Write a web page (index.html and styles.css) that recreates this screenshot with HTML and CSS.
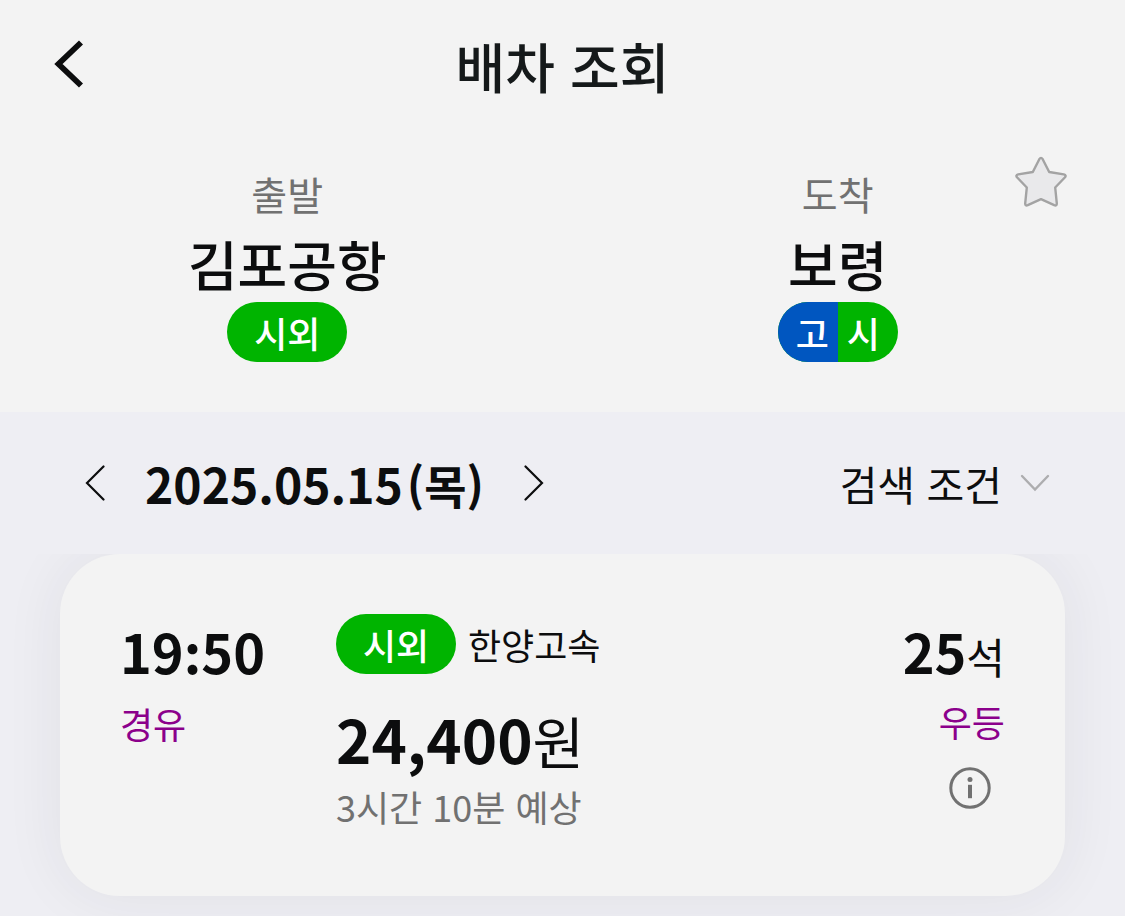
FILE: index.html
```html
<!doctype html>
<html lang="ko">
  <head>
    <meta charset="utf-8">
    <meta name="viewport" content="width=device-width, initial-scale=1">
    <title>배차 조회</title>
    <link rel="stylesheet" href="styles.css">
  </head>

  <body>
    <header class="topbar">
      <button class="icon-btn" type="button" aria-label="뒤로">
        <svg width="30" height="48" viewBox="0 0 30 48" fill="none" stroke="#0c0d0e" stroke-width="5.800">
          <path d="M28 2.500 L5.500 24 L28 45.500"/>
        </svg>
      </button>
      <h1>배차 조회</h1>
    </header>

    <section class="route">
      <div class="stop from">
        <span class="stop-label">출발</span>
        <strong class="stop-name">김포공항</strong>
        <span class="badge">시외</span>
      </div>
      <div class="stop to">
        <span class="stop-label">도착</span>
        <strong class="stop-name">보령</strong>
        <span class="badge split"><span class="express">고</span><span class="intercity">시</span></span>
      </div>
      <button class="icon-btn favorite" type="button" aria-label="즐겨찾기">
        <svg width="54" height="52" viewBox="0 0 54 52" fill="#e9e9eb" stroke="#a3a3a3" stroke-width="2.400" stroke-linejoin="round">
          <path d="M25.300 3.200 Q27 0.500 28.700 3.200 L35.200 16 L49.800 18.400 Q52.800 19.200 50.800 21.500 L41.200 31.500 L42.800 47.400 Q42.800 50.200 40.200 49.200 L27 43.200 L13.800 49.200 Q11.200 50.200 11.200 47.400 L12.800 31.500 L3.200 21.500 Q1.200 19.200 4.200 18.400 L18.800 16 Z"/>
        </svg>
      </button>
    </section>

    <nav class="datebar">
      <div class="date">
        <button class="icon-btn" type="button" aria-label="이전 날짜">
          <svg width="20" height="36" viewBox="0 0 20 36" fill="none" stroke="#0c0d0e" stroke-width="2.200" stroke-linecap="round">
            <path d="M18.500 1.500 L2 18 L18.500 34.500"/>
          </svg>
        </button>
        <time datetime="2025-05-15">2025.05.15<span class="weekday">(목)</span></time>
        <button class="icon-btn" type="button" aria-label="다음 날짜">
          <svg width="20" height="36" viewBox="0 0 20 36" fill="none" stroke="#0c0d0e" stroke-width="2.200" stroke-linecap="round">
            <path d="M1.500 1.500 L18 18 L1.500 34.500"/>
          </svg>
        </button>
      </div>
      <button class="filter" type="button">
        검색 조건
        <svg width="30" height="18" viewBox="0 0 30 18" fill="none" stroke="#adadaf" stroke-width="2.400" stroke-linecap="round">
          <path d="M2 2 L15 15.500 L28 2"/>
        </svg>
      </button>
    </nav>

    <main class="list">
      <article class="card">
        <div class="depart">
          <time class="big">19:50</time>
          <span class="note">경유</span>
        </div>
        <div class="fare">
          <div class="company"><span class="badge">시외</span> 한양고속</div>
          <div class="price"><strong>24,400</strong>원</div>
          <div class="duration">3시간 10분 예상</div>
        </div>
        <div class="seats">
          <div class="count"><strong class="big">25</strong>석</div>
          <span class="note">우등</span>
          <button class="icon-btn info" type="button" aria-label="상세 정보">
            <svg width="42" height="42" viewBox="0 0 42 42">
              <circle cx="21" cy="21" r="19.200" fill="none" stroke="#717171" stroke-width="3"/>
              <circle cx="21" cy="12.600" r="2.500" fill="#717171"/>
              <rect x="19" y="17.800" width="4" height="13.400" fill="#717171"/>
            </svg>
          </button>
        </div>
      </article>
    </main>
  </body>
</html>
```

FILE: styles.css
```css
* {
  box-sizing:border-box;
}

body {
  margin:0;
  min-height:100vh;
  background-color:#eeeef3;
  color:#0c0d0e;
  font-family:"Noto Sans CJK KR", sans-serif;
  font-size:36px;
}

button {
  border:0;
  padding:0;
  background:none;
  color:inherit;
  font:inherit;
  cursor:pointer;
}

svg {
  display:block;
}

.icon-btn {
  display:flex;
  align-items:center;
  justify-content:center;
}

.topbar {
  display:grid;
  grid-template-columns:80px 1fr 80px;
  align-items:center;
  height:128px;
  padding:0 28px;
  background-color:#f3f3f3;
}

.topbar h1 {
  margin:0;
  padding-top:2px;
  color:#15191a;
  font-size:54px;
  font-weight:500;
  text-align:center;
}

.route {
  display:grid;
  grid-template-columns:1fr 1fr;
  padding:36px 12px 50px;
  background-color:#f3f3f3;
}

.stop {
  display:flex;
  flex-direction:column;
  align-items:center;
  grid-row:1;
}

.from {
  grid-column:1;
}

.to,
.favorite {
  grid-column:2;
}

.favorite {
  grid-row:1;
  justify-self:end;
  align-self:start;
  width:60px;
  height:36px;
  margin-right:42px;
}

.stop-label {
  color:#717171;
  font-size:39px;
  line-height:58px;
}

.stop-name {
  margin-top:4px;
  font-size:54px;
  font-weight:500;
  line-height:76px;
}

.badge {
  display:flex;
  align-items:center;
  justify-content:center;
  width:120px;
  height:60px;
  border-radius:30px;
  overflow:hidden;
  background-color:#00b400;
  color:#fff;
  font-weight:500;
  line-height:58px;
}

.split span {
  flex:1;
  line-height:60px;
}

.express {
  padding-right:9px;
  background-color:#0056c0;
  text-align:right;
}

.intercity {
  padding-left:9px;
}

.datebar {
  position:relative;
  z-index:1;
  display:flex;
  align-items:center;
  justify-content:space-between;
  height:142px;
  padding:0 75px;
  background-color:#eeeef3;
}

.date {
  display:flex;
  align-items:center;
  gap:30px;
  font-size:48px;
  font-weight:700;
}

.date .icon-btn {
  width:40px;
  height:60px;
}

.weekday {
  margin-left:4px;
  font-size:46px;
}

.filter {
  display:flex;
  align-items:center;
  gap:18px;
  font-size:41px;
}

.list {
  padding:0 60px 20px;
}

.card {
  display:grid;
  grid-template-columns:216px 1fr auto;
  padding:60px 60px 64px;
  border-radius:60px;
  background-color:#f3f3f3;
  box-shadow:0 0 60px rgba(40, 40, 50, 0.07);
}

/* the Korean form of the colon sits too high between digits */
.big {
  font-family:"Noto Sans CJK JP", sans-serif;
  font-feature-settings:"locl" 0;
  font-size:54px;
  font-weight:700;
  line-height:74px;
}

.depart,
.seats {
  display:flex;
  flex-direction:column;
}

.depart {
  gap:12px;
}

.seats {
  align-items:flex-end;
}

.count {
  font-size:42px;
  line-height:84px;
}

.count .big,
.price strong {
  line-height:1;
}

.note {
  color:#8b008b;
  line-height:46px;
}

.info {
  width:70px;
  height:88px;
}

.company {
  display:flex;
  align-items:center;
  gap:12px;
  line-height:60px;
}

.price {
  margin-top:26px;
  font-size:56px;
  line-height:80px;
}

.price strong {
  font-size:60px;
}

.duration {
  color:#717171;
  line-height:52px;
}
```
